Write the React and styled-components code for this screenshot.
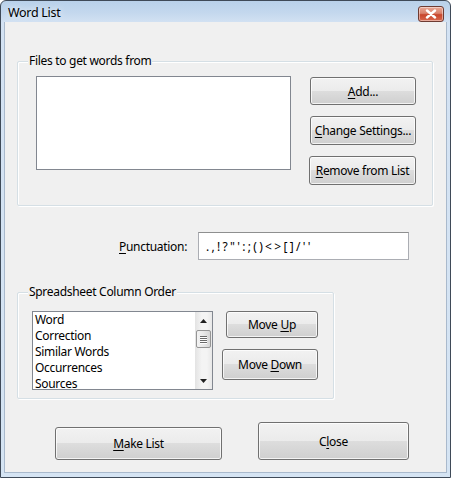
import React from "react";
import styled, { createGlobalStyle } from "styled-components";

const Global = createGlobalStyle`
  html, body { margin: 0; padding: 0; background: #fff; }
  body { font-family: "Segoe UI", "Noto Sans", "Open Sans", sans-serif; font-size: 12px; color: #000; letter-spacing: -0.3px; }
  * { box-sizing: border-box; }
`;

const Window = styled.div`
  width: 451px;
  height: 478px;
  border: 1px solid #3f4a58;
  border-radius: 6px 6px 0 0;
  background: linear-gradient(180deg, #b9d1ea 0px, #c4d8ee 12px, #d3e2f3 22px, #d5e4f3 100%);
  display: flex;
  flex-direction: column;
  overflow: hidden;
`;

const TitleBar = styled.div`
  height: 21px;
  display: flex;
  align-items: center;
  justify-content: space-between;
  padding: 0 6px 0 7px;
  flex: none;
`;

const Title = styled.span`
  font-size: 12.5px;
  color: #000;
  padding-top: 1px;
  text-shadow: 0 0 6px rgba(255,255,255,0.9);
`;

const CloseBtn = styled.div`
  width: 26px;
  height: 16px;
  margin-top: 4px;
  border: 1px solid #6e3b32;
  border-radius: 3px;
  background: linear-gradient(180deg, #eaa896 0%, #d9826c 45%, #c8462c 55%, #d8684e 100%);
  box-shadow: inset 0 0 0 1px rgba(255,255,255,0.45);
  display: flex;
  align-items: center;
  justify-content: center;
`;

const Client = styled.div`
  flex: 1;
  margin: 0 3px 4px 3px;
  background: #f0f0f0;
  border: 1px solid #a9b9cc;
  border-top: none;
  display: flex;
  flex-direction: column;
  align-items: flex-start;
`;

const Group = styled.div`
  position: relative;
  border: 1px solid #d5dfe5;
  border-radius: 2px;
  width: ${p => p.$w}px;
  height: ${p => p.$h}px;
  margin: ${p => p.$mt}px 0 0 12px;
  padding: ${p => p.$pt}px 0 0 ${p => p.$pl}px;
  display: flex;
  gap: ${p => p.$gap}px;
  box-shadow: inset 1px 1px 0 #fff, 1px 1px 0 #fff;
`;

const Caption = styled.span`
  position: absolute;
  top: -9px;
  left: 10px;
  padding: 0 1px;
  background: #f0f0f0;
  line-height: 16px;
`;

const ListBox = styled.div`
  width: ${p => p.$w}px;
  height: ${p => p.$h}px;
  border: 1px solid #828790;
  background: #fff;
  display: flex;
  overflow: hidden;
`;

const Items = styled.div`
  flex: 1;
  padding: 0 0 0 2px;
  overflow: hidden;
`;

const Item = styled.div`
  height: 16px;
  line-height: 16px;
  white-space: nowrap;
`;

const ScrollBar = styled.div`
  width: 17px;
  flex: none;
  background: linear-gradient(90deg, #e3e3e3, #f4f4f4 40%, #f4f4f4 70%, #e8e8e8);
  display: flex;
  flex-direction: column;
  align-items: center;
`;

const Arrow = styled.div`
  height: 17px;
  width: 17px;
  display: flex;
  align-items: center;
  justify-content: center;
`;

const Spacer = styled.div`
  flex: 1;
`;

const Thumb = styled.div`
  width: 15px;
  height: 18px;
  margin-top: 1px;
  border: 1px solid #959595;
  border-radius: 2px;
  background: linear-gradient(90deg, #f3f3f3, #e8e8e8 50%, #d6d6d6);
  display: flex;
  flex-direction: column;
  align-items: center;
  justify-content: center;
  gap: 1px;
`;

const Grip = styled.div`
  width: 7px;
  height: 1px;
  background: #6a6a6a;
  box-shadow: 0 1px 0 #fff;
`;

const Column = styled.div`
  display: flex;
  flex-direction: column;
  align-items: flex-end;
  gap: ${p => p.$gap}px;
  padding-top: ${p => p.$pt || 0}px;
`;

const Button = styled.button`
  width: ${p => p.$w}px;
  height: ${p => p.$h}px;
  border: 1px solid #707070;
  border-radius: 3px;
  background: linear-gradient(180deg, #f2f2f2 0%, #ebebeb 49%, #dddddd 50%, #cfcfcf 100%);
  box-shadow: inset 0 0 0 1px rgba(255,255,255,0.75);
  font-family: inherit;
  font-size: 12px;
  letter-spacing: -0.3px;
  color: #000;
  padding: 0;
  display: flex;
  align-items: center;
  justify-content: center;
  u { text-decoration: underline; text-underline-offset: 2px; }
`;

const PunctRow = styled.div`
  display: flex;
  align-items: center;
  margin-top: 26px;
  padding-left: 114px;
`;

const Label = styled.span`
  width: 79px;
  u { text-decoration: underline; text-underline-offset: 2px; }
`;

const TextBox = styled.div`
  width: 211px;
  height: 28px;
  border: 1px solid #abadb3;
  border-top-color: #8e8f8f;
  background: #fff;
  padding: 0 0 0 7px;
  display: flex;
  align-items: center;
  font-size: 12px;
  letter-spacing: 2.3px;
  white-space: nowrap;
  overflow: hidden;
`;

const BottomRow = styled.div`
  display: flex;
  align-items: flex-end;
  gap: 36px;
  margin-top: 23px;
  padding-left: 50px;
`;

export default function App() {
  return (
    <>
      <Global />
      <Window>
        <TitleBar>
          <Title>Word List</Title>
          <CloseBtn>
            <svg width="12" height="10" viewBox="0 0 12 10">
              <path d="M2 1.5 L10 8.5 M10 1.5 L2 8.5" stroke="#fff" strokeWidth="2.4" strokeLinecap="round" />
            </svg>
          </CloseBtn>
        </TitleBar>
        <Client>
          <Group $w={416} $h={145} $mt={39} $pt={14} $pl={18} $gap={18}>
            <Caption>Files to get words from</Caption>
            <ListBox $w={255} $h={94} />
            <Column $gap={11} $pt={1}>
              <Button $w={106} $h={28}><span><u>A</u>dd...</span></Button>
              <Button $w={106} $h={29}><span><u>C</u>hange Settings...</span></Button>
              <Button $w={107} $h={29}><span><u>R</u>emove from List</span></Button>
            </Column>
          </Group>

          <PunctRow>
            <Label><u>P</u>unctuation:</Label>
            <TextBox>.,!?"':;()&lt;&gt;[]/''</TextBox>
          </PunctRow>

          <Group $w={317} $h={107} $mt={32} $pt={18} $pl={14} $gap={9}>
            <Caption>Spreadsheet Column Order</Caption>
            <ListBox $w={181} $h={79}>
              <Items>
                <Item>Word</Item>
                <Item>Correction</Item>
                <Item>Similar Words</Item>
                <Item>Occurrences</Item>
                <Item>Sources</Item>
              </Items>
              <ScrollBar>
                <Arrow>
                  <svg width="7" height="4" viewBox="0 0 7 4"><path d="M0 4 L3.5 0 L7 4 Z" fill="#202020" /></svg>
                </Arrow>
                <Thumb>
                  <Grip /><Grip /><Grip /><Grip />
                </Thumb>
                <Spacer />
                <Arrow>
                  <svg width="7" height="4" viewBox="0 0 7 4"><path d="M0 0 L7 0 L3.5 4 Z" fill="#202020" /></svg>
                </Arrow>
              </ScrollBar>
            </ListBox>
            <Column $gap={11}>
              <Button $w={92} $h={27}><span>Move <u>U</u>p</span></Button>
              <Button $w={96} $h={31}><span>Move <u>D</u>own</span></Button>
            </Column>
          </Group>

          <BottomRow>
            <Button $w={167} $h={33}><span><u>M</u>ake List</span></Button>
            <Button $w={151} $h={38}><span>C<u>l</u>ose</span></Button>
          </BottomRow>
        </Client>
      </Window>
    </>
  );
}
